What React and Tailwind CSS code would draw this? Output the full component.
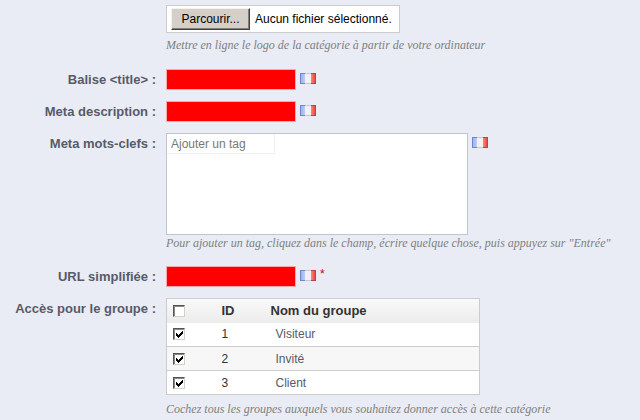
import React, { useState } from "react";

const GROUPS = [
  { id: 1, name: "Visiteur" },
  { id: 2, name: "Invité" },
  { id: 3, name: "Client" }
];

function FlagFr() {
  return (
    <svg width="16" height="11" viewBox="0 0 16 11" className="shrink-0" role="img" aria-label="Français">
      <defs>
        <linearGradient id="flagBlue" x1="0" x2="1">
          <stop offset="0" stopColor="#8fb0ee" />
          <stop offset="1" stopColor="#bccdf5" />
        </linearGradient>
        <linearGradient id="flagRed" x1="0" x2="1">
          <stop offset="0" stopColor="#f88a80" />
          <stop offset="1" stopColor="#e8392f" />
        </linearGradient>
      </defs>
      <rect width="16" height="11" fill="#f4f0f2" />
      <rect width="5" height="11" fill="url(#flagBlue)" />
      <rect x="11" width="5" height="11" fill="url(#flagRed)" />
      <path d="M0 .5H5M0 10.5H5M.5 0V11" stroke="#6f87c4" fill="none" />
      <path d="M5 .5H11M5 10.5H11" stroke="#cbc5cc" />
      <path d="M11 .5H16M11 10.5H16M15.5 0V11" stroke="#b8434a" fill="none" />
    </svg>
  );
}

function Checkbox(props) {
  return (
    <span className="grid h-3 w-3">
      <input
        type="checkbox"
        className="peer col-start-1 row-start-1 h-3 w-3 appearance-none border border-t-[#555] border-l-[#555] border-r-[#d4d0c8] border-b-[#d4d0c8] bg-white shadow-[inset_1px_1px_0_#8a8a8a]"
        {...props}
      />
      <svg
        viewBox="0 0 12 12"
        shapeRendering="crispEdges"
        className="pointer-events-none col-start-1 row-start-1 hidden h-3 w-3 peer-checked:block"
        aria-hidden="true"
      >
        <path d="M3 5v3l2 2 5-5V2L5 7z" fill="#000" />
      </svg>
    </span>
  );
}

function Row({ label, htmlFor, children }) {
  return (
    <div className="grid grid-cols-[156px_minmax(0,1fr)] gap-[10px]">
      {label ? (
        <label htmlFor={htmlFor} className="text-right text-[13px] leading-[21px] font-bold whitespace-nowrap text-[#585a69]">
          {label}
        </label>
      ) : (
        <span />
      )}
      <div>{children}</div>
    </div>
  );
}

function Hint({ children }) {
  return (
    <p className="font-['Liberation_Serif',serif] text-[12px] leading-4 text-[#7f7f7f] italic">
      {children}
    </p>
  );
}

function LangField({ id, required }) {
  return (
    <div className="flex gap-1">
      <input id={id} type="text" className="h-[21px] w-[130px] border border-[#f5a9ac] bg-[#ff0000] px-1 text-[12px]" />
      <div className="flex items-start gap-1 pt-1">
        <FlagFr />
        {required && <sup className="top-0 text-[12px] leading-[8px] text-[#cc0000]">*</sup>}
      </div>
    </div>
  );
}

export default function App() {
  const [checked, setChecked] = useState([1, 2, 3]);
  const fileRef = React.useRef(null);

  const toggle = (id) =>
    setChecked((prev) => (prev.includes(id) ? prev.filter((x) => x !== id) : [...prev, id]));

  return (
    <form className="flex min-h-screen flex-col gap-[11px] bg-[#e9ecf4] pt-[5px] font-['Liberation_Sans',Arial,sans-serif]">
      <Row>
        <div className="flex h-7 w-fit items-center gap-[5px] border border-[#cccccc] bg-white pr-[7px] pl-1 text-[12px] text-black">
          <input ref={fileRef} type="file" className="hidden" aria-label="Logo" />
          <button
            type="button"
            onClick={() => fileRef.current.click()}
            className="h-[22px] w-[79px] border border-t-[#f4f2ee] border-r-[#404040] border-b-[#404040] border-l-[#f4f2ee] bg-[#d4d0c8] shadow-[inset_-1px_-1px_0_#808080]"
          >
            Parcourir...
          </button>
          <span>Aucun fichier sélectionné.</span>
        </div>
        <div className="pt-1 pb-[5px]">
          <Hint>Mettre en ligne le logo de la catégorie à partir de votre ordinateur</Hint>
        </div>
      </Row>

      <Row label="Balise <title> :" htmlFor="meta-title">
        <LangField id="meta-title" />
      </Row>

      <Row label="Meta description :" htmlFor="meta-description">
        <LangField id="meta-description" />
      </Row>

      <Row label="Meta mots-clefs :" htmlFor="meta-keywords">
        <div className="flex gap-1">
          <div className="h-[102px] w-full max-w-[302px] border border-[#c2c6cc] bg-white">
            <input
              id="meta-keywords"
              type="text"
              placeholder="Ajouter un tag"
              className="block h-5 w-[108px] border-r border-b border-[#f0f0f0] px-1 text-[12px] placeholder:text-[#777777]"
            />
          </div>
          <div className="pt-1">
            <FlagFr />
          </div>
        </div>
        <div className="pb-1">
          <Hint>Pour ajouter un tag, cliquez dans le champ, écrire quelque chose, puis appuyez sur "Entrée"</Hint>
        </div>
      </Row>

      <Row label="URL simplifiée :" htmlFor="link-rewrite">
        <LangField id="link-rewrite" required />
      </Row>

      <Row label="Accès pour le groupe :" htmlFor="check-all">
        <table className="w-full max-w-[314px] table-fixed border-collapse border border-[#cccccc] bg-white text-left text-[12px] text-[#333333]">
          <colgroup>
            <col className="w-[50px]" />
            <col className="w-[49px]" />
            <col />
          </colgroup>
          <thead>
            <tr className="h-6 bg-linear-to-b from-[#f9f9f9] to-[#ececec] text-[13px]">
              <th className="pl-[6px]">
                <Checkbox
                  id="check-all"
                  checked={false}
                  onChange={() => setChecked(GROUPS.map((g) => g.id))}
                />
              </th>
              <th className="pl-[5px]">ID</th>
              <th className="pl-[5px]">Nom du groupe</th>
            </tr>
          </thead>
          <tbody>
            {GROUPS.map((g) => (
              <tr key={g.id} className="h-6 border-b border-[#cccccc] even:bg-[#f7f7f7]">
                <td className="pl-[6px]">
                  <Checkbox
                    id={`group-${g.id}`}
                    checked={checked.includes(g.id)}
                    onChange={() => toggle(g.id)}
                  />
                </td>
                <td className="pl-[5px]">{g.id}</td>
                <td className="pl-[10px] text-[#585a69]">
                  <label htmlFor={`group-${g.id}`}>{g.name}</label>
                </td>
              </tr>
            ))}
          </tbody>
        </table>
        <div className="pt-[6px]">
          <Hint>Cochez tous les groupes auxquels vous souhaitez donner accès à cette catégorie</Hint>
        </div>
      </Row>
    </form>
  );
}
